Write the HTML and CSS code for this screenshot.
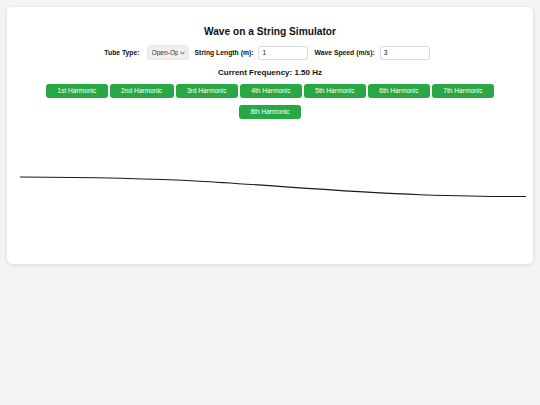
FILE: index.html
```html
<!DOCTYPE html>
<html>
<head>
<meta charset="utf-8">
<title>Wave on a String Simulator</title>
<link rel="stylesheet" href="styles.css">
</head>
<body>
<div class="card">
  <h1 class="title">Wave on a String Simulator</h1>
  <div class="controls">
    <label class="lbl" for="tube">Tube Type:</label>
    <span class="selwrap">
      <select id="tube" class="sel">
        <option>Open-Open</option>
        <option>Open-Closed</option>
      </select>
      <svg class="chev" width="5" height="4" viewBox="0 0 5 4"><path d="M0.6 1 L2.5 2.9 L4.4 1" fill="none" stroke="#333" stroke-width="0.9"/></svg>
    </span>
    <label class="lbl" for="len">String Length (m):</label>
    <input id="len" class="inp" type="text" value="1">
    <label class="lbl" for="spd">Wave Speed (m/s):</label>
    <input id="spd" class="inp" type="text" value="3">
  </div>
  <div class="freq">Current Frequency: 1.50 Hz</div>
  <div class="harmonics">
    <button class="hbtn">1st Harmonic</button>
    <button class="hbtn">2nd Harmonic</button>
    <button class="hbtn">3rd Harmonic</button>
    <button class="hbtn">4th Harmonic</button>
    <button class="hbtn">5th Harmonic</button>
    <button class="hbtn">6th Harmonic</button>
    <button class="hbtn">7th Harmonic</button>
    <button class="hbtn">8th Harmonic</button>
  </div>
  <svg class="wave" width="506" height="125" viewBox="0 0 506 125">
    <path d="M0 52 C 60 52.3, 120 53, 180 56.2 S 330 67.5, 400 69.7 S 480 71.5, 506 71.5" fill="none" stroke="#1a1a1a" stroke-width="1.1"/>
  </svg>
</div>
</body>
</html>
```
FILE: styles.css
```css
html, body {
  margin: 0;
  padding: 0;
}
body {
  background: #f4f4f4;
  padding: 7px;
  font-family: "Liberation Sans", Arial, sans-serif;
  color: #111;
}
.card {
  box-sizing: border-box;
  width: 526px;
  height: 257px;
  background: #fff;
  border-radius: 5px;
  box-shadow: 0 1px 4px rgba(0, 0, 0, 0.12);
  padding-top: 19px;
  text-align: center;
}
.title {
  margin: 0;
  font-size: 10.2px;
  line-height: 12px;
  font-weight: bold;
}
.controls {
  margin-top: 7px;
  height: 15px;
  display: flex;
  justify-content: center;
  align-items: center;
}
.lbl {
  font-size: 6.8px;
  font-weight: bold;
  margin-right: 6px;
}
.selwrap {
  position: relative;
  display: block;
  margin: 0 6px 0 1px;
}
.sel {
  display: block;
  box-sizing: border-box;
  width: 42px;
  height: 15px;
  padding: 0 10px 0 4px;
  font-family: "Liberation Sans", Arial, sans-serif;
  font-size: 6.6px;
  color: #333;
  background: #efefef;
  border: 1px solid #e6e6e6;
  border-radius: 3px;
  appearance: none;
  -webkit-appearance: none;
  overflow: hidden;
  white-space: nowrap;
}
.chev {
  position: absolute;
  right: 4px;
  top: 5.5px;
}
.inp {
  box-sizing: border-box;
  width: 50px;
  height: 14px;
  margin: 0 6px 0 -1px;
  padding: 0 3px;
  font-family: "Liberation Sans", Arial, sans-serif;
  font-size: 6.6px;
  color: #222;
  border: 1px solid #dcdcdc;
  border-radius: 2px;
  background: #fff;
}
.freq {
  margin-top: 7.5px;
  font-size: 8px;
  line-height: 10px;
  font-weight: bold;
}
.harmonics {
  margin: 6.5px auto 0;
  width: 450px;
  display: flex;
  flex-wrap: wrap;
  justify-content: center;
  column-gap: 2px;
  row-gap: 7px;
}
.hbtn {
  box-sizing: border-box;
  height: 14px;
  padding: 0 11.4px;
  border: none;
  border-radius: 3px;
  background: #28a745;
  color: #fff;
  font-family: "Liberation Sans", Arial, sans-serif;
  font-size: 6.6px;
  line-height: 14px;
}
.wave {
  display: block;
  margin: 6px 0 0 13px;
}
```
